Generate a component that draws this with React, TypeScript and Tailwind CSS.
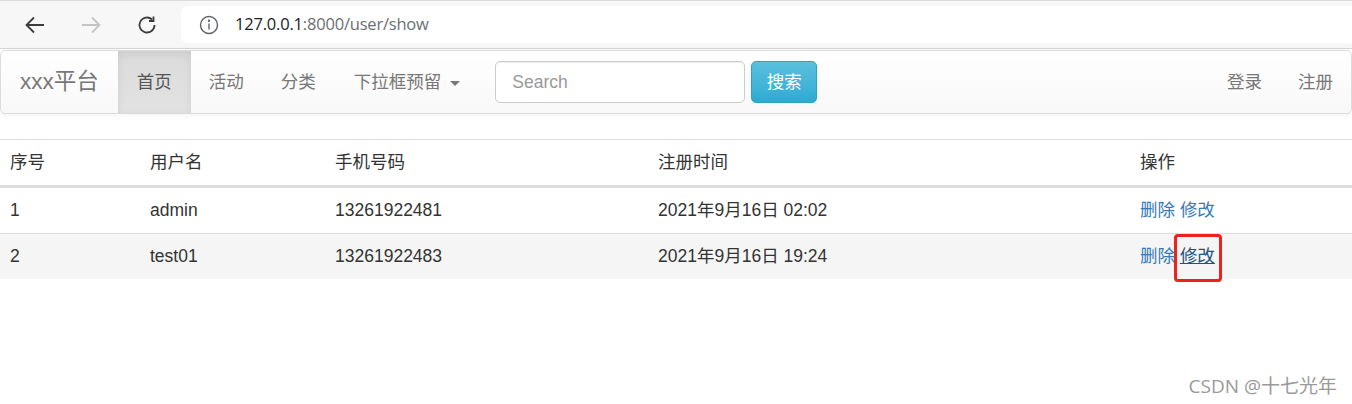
import React from "react";

const FONT = "font-['Liberation_Sans','Noto_Sans_CJK_SC',sans-serif]";

function BrowserBar() {
  return (
    <div className="flex h-[49px] items-center border-t border-b border-t-[#dcdcdc] border-b-[#d6d6d6] bg-[#f7f7f7]">
      {/* back */}
      <svg className="ml-[24px]" width="22" height="22" viewBox="0 0 22 22" fill="none" stroke="#3c3c3c" strokeWidth="1.8">
        <path d="M20 11H3M10 3.5L2.5 11 10 18.5" />
      </svg>
      {/* forward (disabled) */}
      <svg className="ml-[34px]" width="22" height="22" viewBox="0 0 22 22" fill="none" stroke="#c4c4c4" strokeWidth="1.8">
        <path d="M2 11h17M12 3.5l7.5 7.5-7.5 7.5" />
      </svg>
      {/* reload */}
      <svg className="ml-[34px]" width="22" height="22" viewBox="0 0 22 22" fill="none" stroke="#3c3c3c" strokeWidth="1.8">
        <path d="M18.5 11a7.5 7.5 0 1 1-2.4-5.5" />
        <path d="M17.5 2.5v4.5H13" />
      </svg>
      <div className="ml-[23px] flex h-[37px] flex-1 items-center rounded-l-[7px] bg-white">
        <svg className="ml-[18px]" width="20" height="20" viewBox="0 0 20 20" fill="none" stroke="#5f6368" strokeWidth="1.4">
          <circle cx="10" cy="10" r="8.5" />
          <path d="M10 8.5v6" />
          <circle cx="10" cy="5.8" r="0.5" fill="#5f6368" />
        </svg>
        <span className="ml-[16px] font-['Open_Sans',sans-serif] text-[16.5px] tracking-[-0.2px]">
          <span className="text-[#202124]">127.0.0.1</span>
          <span className="text-[#6b6f73]">:8000/user/show</span>
        </span>
      </div>
    </div>
  );
}

function Navbar() {
  return (
    <div className="mt-px flex h-[64px] items-stretch rounded-[5px] border border-[#dcdcdc] bg-gradient-to-b from-white to-[#f8f8f8] shadow-[0_1px_6px_rgba(0,0,0,0.06)]">
      <a className="flex items-center px-[19px] text-[22.5px] text-[#777]">xxx平台</a>
      <a className="flex items-center bg-gradient-to-b from-[#dbdbdb] to-[#e2e2e2] px-[19px] text-[17.5px] text-[#555] shadow-[inset_0_3px_9px_rgba(0,0,0,0.075)]">
        首页
      </a>
      <a className="flex items-center px-[18px] text-[17.5px] text-[#777]">活动</a>
      <a className="flex items-center px-[19px] text-[17.5px] text-[#777]">分类</a>
      <a className="flex items-center px-[19px] text-[17.5px] text-[#777]">
        下拉框预留
        <span className="ml-[9px] mt-[2px] h-0 w-0 border-x-[5px] border-t-[5px] border-x-transparent border-t-[#777]" />
      </a>
      <div className="ml-[16px] flex items-center gap-[6px]">
        <div className="flex h-[42px] w-[250px] items-center rounded-[5px] border border-[#ccc] bg-white px-[16px] text-[17.5px] text-[#999] shadow-[inset_0_1px_1px_rgba(0,0,0,0.075)]">
          Search
        </div>
        <button className="flex h-[42px] w-[66px] items-center justify-center rounded-[5px] border border-[#28a4c9] bg-gradient-to-b from-[#5bc0de] to-[#2aabd2] text-[17.5px] text-white">
          搜索
        </button>
      </div>
      <div className="ml-auto flex">
        <a className="flex items-center px-[18px] text-[17.5px] text-[#777]">登录</a>
        <a className="flex items-center px-[18px] text-[17.5px] text-[#777]">注册</a>
      </div>
    </div>
  );
}

const rows = [
  { id: "1", name: "admin", phone: "13261922481", time: "2021年9月16日 02:02", hover: false },
  { id: "2", name: "test01", phone: "13261922483", time: "2021年9月16日 19:24", hover: true },
];

function UserTable() {
  return (
    <table className="mt-[25px] w-full border-collapse text-left text-[17.5px] text-[#333]">
      <thead>
        <tr className="border-t border-[#ddd]">
          <th className="w-[140px] border-b-[3px] border-[#ddd] px-[10px] py-[10px] font-normal leading-[25px]">序号</th>
          <th className="w-[185px] border-b-[3px] border-[#ddd] px-[10px] py-[10px] font-normal leading-[25px]">用户名</th>
          <th className="w-[323px] border-b-[3px] border-[#ddd] px-[10px] py-[10px] font-normal leading-[25px]">手机号码</th>
          <th className="w-[482px] border-b-[3px] border-[#ddd] px-[10px] py-[10px] font-normal leading-[25px]">注册时间</th>
          <th className="border-b-[3px] border-[#ddd] px-[10px] py-[10px] font-normal leading-[25px]">操作</th>
        </tr>
      </thead>
      <tbody>
        {rows.map((r, i) => (
          <tr key={r.id} className={`${i > 0 ? "border-t border-[#ddd]" : ""} ${r.hover ? "bg-[#f5f5f5]" : ""}`}>
            <td className="px-[10px] py-[10px] leading-[25px]">{r.id}</td>
            <td className="px-[10px] py-[10px] leading-[25px]">{r.name}</td>
            <td className="px-[10px] py-[10px] leading-[25px]">{r.phone}</td>
            <td className="px-[10px] py-[10px] leading-[25px]">{r.time}</td>
            <td className="px-[10px] py-[10px] leading-[25px] text-[#337ab7]">
              <a>删除</a> <a className={r.hover ? "text-[#23527c] underline" : ""}>修改</a>
            </td>
          </tr>
        ))}
      </tbody>
    </table>
  );
}

export default function App() {
  return (
    <div className={`relative h-[404px] w-[1352px] overflow-hidden bg-white ${FONT}`}>
      <BrowserBar />
      <Navbar />
      <UserTable />
      {/* red annotation box */}
      <div className="absolute left-[1174px] top-[234px] h-[48px] w-[48px] rounded-[4px] border-[3px] border-[#f0201a]" />
      <div className="absolute right-[15px] top-[372px] font-['Open_Sans','Noto_Sans_CJK_SC',sans-serif] text-[19px] text-[#9a9a9a]">
        CSDN @十七光年
      </div>
    </div>
  );
}
